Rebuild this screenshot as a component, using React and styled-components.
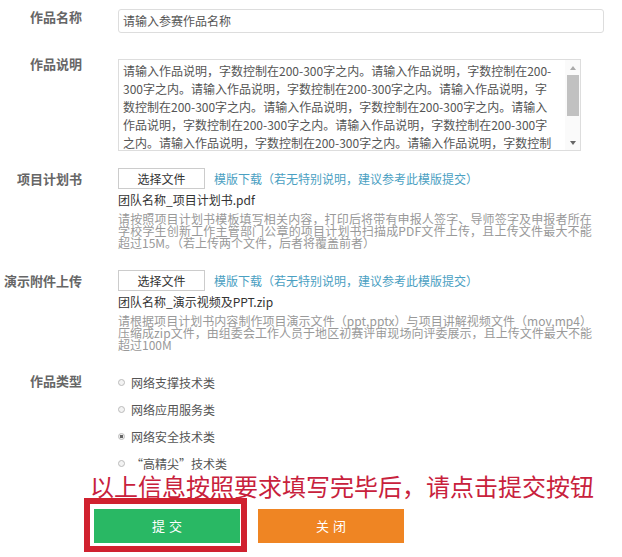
import React, { useLayoutEffect, useRef, useState } from 'react';
import styled, { createGlobalStyle } from 'styled-components';

const GlobalStyle = createGlobalStyle`
  body {
    margin: 0;
    background: #fff;
    font-family: "Noto Sans CJK SC", "Noto Sans", sans-serif;
  }
`;

const Page = styled.div`
  width: 622px;
  height: 557px;
  padding-top: 9px;
  box-sizing: border-box;
  overflow: hidden;
`;

const Row = styled.div`
  display: grid;
  grid-template-columns: 82px 486px;
  column-gap: 36px;
  margin-top: ${(p) => p.$gap || 0}px;
`;

const Label = styled.div`
  text-align: right;
  font-size: 13px;
  font-weight: bold;
  color: #666;
  line-height: ${(p) => p.$lh || 18}px;
  margin-top: ${(p) => p.$top || 0}px;
  white-space: nowrap;
`;

const TextInput = styled.div`
  height: 24px;
  box-sizing: border-box;
  border: 1px solid #ddd;
  border-radius: 3px;
  padding-left: 4px;
  font-size: 12px;
  line-height: 22px;
  color: #555;
`;

const TextArea = styled.div`
  display: flex;
  width: 463px;
  height: 92px;
  box-sizing: border-box;
  border: 1px solid #ddd;
`;

const AreaText = styled.div`
  flex: 1;
  padding: 2px 0 0 4px;
  overflow: hidden;
  font-size: 12px;
  line-height: 18px;
  color: #555;

  span {
    display: block;
    white-space: nowrap;
  }
`;

const Scrollbar = styled.div`
  width: 15px;
  display: flex;
  flex-direction: column;
  align-items: center;
  background: #fafafa;
`;

const Arrow = styled.div`
  height: 15px;
  display: flex;
  align-items: center;
  justify-content: center;

  &::before {
    content: '';
    border-left: 3px solid transparent;
    border-right: 3px solid transparent;
    ${(p) => (p.$down ? 'border-top: 4px solid #666;' : 'border-bottom: 4px solid #aaa;')}
  }
`;

const Thumb = styled.div`
  width: 12px;
  height: 41px;
  background: #c1c1c1;
`;

const Track = styled.div`
  flex: 1;
`;

const FileLine = styled.div`
  display: flex;
  align-items: center;
  gap: 9px;
`;

const FileButton = styled.div`
  width: 87px;
  height: 21px;
  box-sizing: border-box;
  border: 1px solid #ccc;
  font-size: 12px;
  line-height: 19px;
  text-align: center;
  color: #333;
`;

const TemplateLink = styled.span`
  font-size: 12px;
  color: #4aa0c2;
`;

const FileName = styled.div`
  margin-top: 1px;
  font-size: 12px;
  line-height: 20px;
  color: #333;
`;

const Hint = styled.div`
  width: 474px;
  margin-top: 3px;
  font-size: 12px;
  line-height: 12px;
  color: #999;
`;

const HintRow = styled.div`
  white-space: nowrap;
`;

const RadioList = styled.div`
  display: flex;
  flex-direction: column;
  gap: 5px;
  margin-top: -2px;
`;

const RadioItem = styled.div`
  display: flex;
  align-items: center;
  height: 22px;
  font-size: 12px;
  color: #555;
`;

const Dot = styled.span`
  width: 7px;
  height: 7px;
  box-sizing: border-box;
  border-radius: 50%;
  border: 1px solid #bbb;
  background: ${(p) => (p.$checked ? 'radial-gradient(circle, #666 0 1.5px, #eee 2px)' : '#f3f3f3')};
  margin-right: 6px;
`;

const Notice = styled.div`
  padding-left: 90px;
  font-size: 24px;
  line-height: 24px;
  color: #c8213c;
  white-space: nowrap;
`;

const Actions = styled.div`
  display: flex;
  align-items: flex-start;
  padding-left: 84px;
`;

const Highlight = styled.div`
  border: 6px solid #d0212f;
  padding: 5px 1px 3px 4px;
`;

const ActionButton = styled.div`
  width: 146px;
  height: 34px;
  background: ${(p) => p.$color};
  color: #fff;
  font-size: 13px;
  line-height: 34px;
  text-align: center;
  letter-spacing: 4px;
  text-indent: 4px;
  margin-top: ${(p) => p.$top || 0}px;
  margin-left: ${(p) => p.$left || 0}px;
`;

const HINT_WIDTH = 474;

// spreads a full hint line to the column width, as justified text does
function HintLine({ text, fill }) {
  const ref = useRef(null);
  const [spacing, setSpacing] = useState(0);

  useLayoutEffect(() => {
    if (!fill || !ref.current) return;
    const w = ref.current.getBoundingClientRect().width;
    const chars = Array.from(text).length;
    if (w < HINT_WIDTH) setSpacing((HINT_WIDTH - w) / chars);
  }, [text, fill]);

  return (
    <HintRow>
      <span ref={ref} style={spacing ? { letterSpacing: `${spacing}px` } : undefined}>
        {text}
      </span>
    </HintRow>
  );
}

const descLines = [
  '请输入作品说明，字数控制在200-300字之内。请输入作品说明，字数控制在200-',
  '300字之内。请输入作品说明，字数控制在200-300字之内。请输入作品说明，字',
  '数控制在200-300字之内。请输入作品说明，字数控制在200-300字之内。请输入',
  '作品说明，字数控制在200-300字之内。请输入作品说明，字数控制在200-300字',
  '之内。请输入作品说明，字数控制在200-300字之内。请输入作品说明，字数控制',
];

const uploads = [
  {
    label: '项目计划书',
    gap: 17,
    file: '团队名称_项目计划书.pdf',
    hint: [
      '请按照项目计划书模板填写相关内容，打印后将带有申报人签字、导师签字及申报者所在',
      '学校学生创新工作主管部门公章的项目计划书扫描成PDF文件上传，且上传文件最大不能',
      '超过15M。（若上传两个文件，后者将覆盖前者）',
    ],
  },
  {
    label: '演示附件上传',
    gap: 21,
    file: '团队名称_演示视频及PPT.zip',
    hint: [
      '请根据项目计划书内容制作项目演示文件（ppt,pptx）与项目讲解视频文件（mov,mp4）',
      '压缩成zip文件，由组委会工作人员于地区初赛评审现场向评委展示，且上传文件最大不能',
      '超过100M',
    ],
  },
];

const types = ['网络支撑技术类', '网络应用服务类', '网络安全技术类', '“高精尖”技术类'];

export default function App() {
  return (
    <Page>
      <GlobalStyle />
      <Row>
        <Label $top={-1}>作品名称</Label>
        <TextInput>请输入参赛作品名称</TextInput>
      </Row>

      <Row $gap={26}>
        <Label $top={-4}>作品说明</Label>
        <TextArea>
          <AreaText>
            {descLines.map((l, i) => (
              <span key={i}>{l}</span>
            ))}
          </AreaText>
          <Scrollbar>
            <Arrow />
            <Thumb />
            <Track />
            <Arrow $down />
          </Scrollbar>
        </TextArea>
      </Row>

      {uploads.map((u) => (
        <Row key={u.label} $gap={u.gap}>
          <Label $lh={21}>{u.label}</Label>
          <div>
            <FileLine>
              <FileButton>选择文件</FileButton>
              <TemplateLink>模版下载（若无特别说明，建议参考此模版提交）</TemplateLink>
            </FileLine>
            <FileName>{u.file}</FileName>
            <Hint>
              {u.hint.map((l, i) => (
                <HintLine key={i} text={l} fill={i < u.hint.length - 1} />
              ))}
            </Hint>
          </div>
        </Row>
      ))}

      <Row $gap={22}>
        <Label $top={-1}>作品类型</Label>
        <RadioList>
          {types.map((t, i) => (
            <RadioItem key={t}>
              <Dot $checked={i === 2} />
              {t}
            </RadioItem>
          ))}
        </RadioList>
      </Row>

      <Notice>以上信息按照要求填写完毕后，请点击提交按钮</Notice>

      <Actions>
        <Highlight>
          <ActionButton $color="#29b864">提交</ActionButton>
        </Highlight>
        <ActionButton $color="#ef8523" $top={11} $left={11}>关闭</ActionButton>
      </Actions>
    </Page>
  );
}
